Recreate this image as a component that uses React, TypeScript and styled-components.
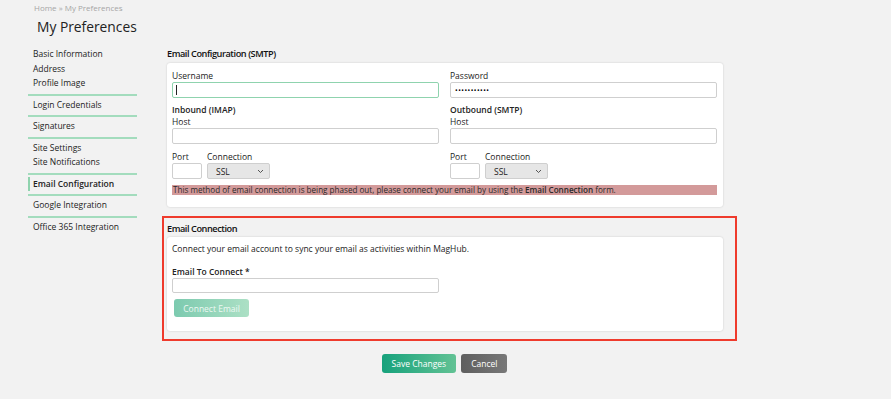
import styled, { createGlobalStyle } from "styled-components";

const GlobalStyle = createGlobalStyle`
  html, body {
    margin: 0;
    padding: 0;
    background: #f2f2f2;
  }
  body {
    font-family: "Open Sans", "Liberation Sans", sans-serif;
    color: #333;
    font-size: 8.5px;
  }
`;

const Page = styled.div`
  width: 891px;
  min-height: 399px;
  background: #f2f2f2;
`;

const Header = styled.div`
  padding: 2px 0 0 34px;
  height: 45px;
  box-sizing: border-box;
`;

const Crumbs = styled.div`
  font-size: 8px;
  line-height: 12px;
  color: #a6a6a6;
`;

const Title = styled.h1`
  margin: 3px 0 0 3px;
  font-size: 13.8px;
  line-height: 20px;
  font-weight: 400;
  color: #222;
`;

const Body = styled.div`
  display: flex;
  padding-left: 28px;
`;

const Sidebar = styled.nav`
  width: 109px;
  margin-right: 25px;
  flex-shrink: 0;
`;

const Group = styled.div<{ $last?: boolean }>`
  padding: 2px 0 3px;
  border-bottom: ${(p) => (p.$last ? "none" : "2px solid #a3dcbd")};
`;

const NavItem = styled.div<{ $active?: boolean }>`
  line-height: 14.5px;
  padding-left: ${(p) => (p.$active ? "3px" : "5px")};
  border-left: ${(p) => (p.$active ? "2px solid #8fd3ae" : "none")};
  font-weight: ${(p) => (p.$active ? 600 : 400)};
  color: #222;
  white-space: nowrap;
`;

const Main = styled.div`
  width: 575px;
  margin-top: 3px;
`;

const SectionTitle = styled.h2`
  margin: 0;
  font-size: 9.2px;
  line-height: 12px;
  font-weight: 600;
  letter-spacing: -0.45px;
  color: #111;
`;

const ConfigSection = styled.section`
  margin-left: 5px;
  width: 556px;
`;

const Panel = styled.div<{ $pad?: string; $mt?: number }>`
  margin-top: ${(p) => (p.$mt ?? 3)}px;
  background: #fff;
  border-radius: 3px;
  box-shadow: 0 0 2px rgba(0, 0, 0, 0.18);
  padding: ${(p) => p.$pad || "7px 6px 12px 5px"};
`;

const Columns = styled.div`
  display: grid;
  grid-template-columns: 1fr 1fr;
  column-gap: 11px;
`;

const Field = styled.div<{ $mt?: number }>`
  display: flex;
  flex-direction: column;
  margin-top: ${(p) => p.$mt || 0}px;
`;

const Label = styled.label<{ $bold?: boolean }>`
  display: block;
  line-height: 12px;
  font-weight: ${(p) => (p.$bold ? 600 : 400)};
  color: #222;
`;

const SubHead = styled.div`
  margin-top: 6px;
  line-height: 12px;
  font-weight: 600;
  color: #222;
`;

const CaretBox = styled.div`
  position: relative;
  &::after {
    content: "";
    position: absolute;
    left: 4px;
    top: 3px;
    width: 1px;
    height: 10px;
    background: #222;
  }
`;

const TextInput = styled.input<{ $focused?: boolean; $w?: number; $h?: number }>`
  display: block;
  box-sizing: border-box;
  width: ${(p) => (p.$w ? `${p.$w}px` : "100%")};
  height: ${(p) => p.$h || 16}px;
  margin: 0;
  padding: 0 4px;
  border: 1px solid ${(p) => (p.$focused ? "#8fd3ae" : "#cfcfcf")};
  border-radius: 2px;
  background: #fff;
  font-family: inherit;
  font-size: 7px;
  outline: none;
  letter-spacing: 0.5px;
`;

const PortRow = styled.div`
  display: flex;
  gap: 5px;
  margin-top: 7px;
`;

const SelectWrap = styled.div`
  position: relative;
  width: 63px;
  svg {
    position: absolute;
    right: 6px;
    top: 6px;
    pointer-events: none;
  }
`;

const Select = styled.select`
  display: block;
  appearance: none;
  width: 100%;
  height: 16px;
  margin: 0;
  padding: 0 8px;
  border: 1px solid #cfcfcf;
  border-radius: 2px;
  background: #e6e6e6;
  font-family: inherit;
  font-size: 8.5px;
  color: #222;
`;

const Warning = styled.div`
  margin-top: 6px;
  height: 10px;
  line-height: 10px;
  padding-left: 1px;
  background: #d39a9a;
  color: #2a2a2a;
  font-size: 8.1px;
  white-space: nowrap;
  b {
    font-weight: 600;
  }
`;

const Highlight = styled.div`
  margin-top: 9px;
  border: 2px solid #ef3b2d;
  padding: 5px 12px 8px 3px;
`;

const Intro = styled.p`
  margin: 0;
  line-height: 12px;
  color: #222;
`;

const ConnectButton = styled.button`
  margin: 6px 0 0 2px;
  width: 75px;
  height: 18px;
  border: none;
  border-radius: 3px;
  background: linear-gradient(90deg, #7ccaaf, #ace0c5);
  color: #eef8f3;
  font-family: inherit;
  font-size: 8.5px;
  padding: 0;
`;

const Actions = styled.div`
  display: flex;
  justify-content: center;
  gap: 5px;
  margin: 13px 0 0;
  padding-right: 10px;
`;

const ActionButton = styled.button<{ $kind: "primary" | "neutral" }>`
  height: 19px;
  padding: 0 10px;
  border: none;
  border-radius: 3px;
  background: ${(p) =>
    p.$kind === "primary"
      ? "linear-gradient(90deg, #17a27c, #62c294)"
      : "linear-gradient(90deg, #5f5f5f, #787878)"};
  color: #fff;
  font-family: inherit;
  font-size: 8.5px;
`;

const Chevron = () => (
  <svg width="7" height="5" viewBox="0 0 7 5">
    <path d="M1 1l2.5 2.5L6 1" fill="none" stroke="#444" strokeWidth="0.9" />
  </svg>
);

const navGroups = [
  ["Basic Information", "Address", "Profile Image"],
  ["Login Credentials"],
  ["Signatures"],
  ["Site Settings", "Site Notifications"],
  ["Email Configuration"],
  ["Google Integration"],
  ["Office 365 Integration"],
];

function ServerBlock({ title }: { title: string }) {
  return (
    <div>
      <SubHead>{title}</SubHead>
      <Label>Host</Label>
      <TextInput type="text" />
      <PortRow>
        <Field>
          <Label>Port</Label>
          <TextInput type="text" $w={30} />
        </Field>
        <Field>
          <Label>Connection</Label>
          <SelectWrap>
            <Select defaultValue="SSL">
              <option>SSL</option>
              <option>TLS</option>
            </Select>
            <Chevron />
          </SelectWrap>
        </Field>
      </PortRow>
    </div>
  );
}

export default function App() {
  return (
    <Page>
      <GlobalStyle />
      <Header>
        <Crumbs>Home » My Preferences</Crumbs>
        <Title>My Preferences</Title>
      </Header>
      <Body>
        <Sidebar>
          {navGroups.map((group, i) => (
            <Group key={i} $last={i === navGroups.length - 1}>
              {group.map((item) => (
                <NavItem key={item} $active={item === "Email Configuration"}>
                  {item}
                </NavItem>
              ))}
            </Group>
          ))}
        </Sidebar>
        <Main>
          <ConfigSection>
            <SectionTitle>Email Configuration (SMTP)</SectionTitle>
            <Panel>
              <Columns>
                <Field>
                  <Label>Username</Label>
                  <CaretBox>
                    <TextInput type="text" $focused />
                  </CaretBox>
                </Field>
                <Field>
                  <Label>Password</Label>
                  <TextInput type="password" defaultValue="secretpassw" />
                </Field>
                <ServerBlock title="Inbound (IMAP)" />
                <ServerBlock title="Outbound (SMTP)" />
              </Columns>
              <Warning>
                This method of email connection is being phased out, please connect your email by using the{" "}
                <b>Email Connection</b> form.
              </Warning>
            </Panel>
          </ConfigSection>
          <Highlight>
            <SectionTitle>Email Connection</SectionTitle>
            <Panel $mt={2} $pad="6px 6px 14px 5px">
              <Intro>Connect your email account to sync your email as activities within MagHub.</Intro>
              <Field $mt={11}>
                <Label $bold>Email To Connect *</Label>
                <TextInput type="text" $w={267} $h={15} />
              </Field>
              <ConnectButton disabled>Connect Email</ConnectButton>
            </Panel>
          </Highlight>
          <Actions>
            <ActionButton $kind="primary">Save Changes</ActionButton>
            <ActionButton $kind="neutral">Cancel</ActionButton>
          </Actions>
        </Main>
      </Body>
    </Page>
  );
}
